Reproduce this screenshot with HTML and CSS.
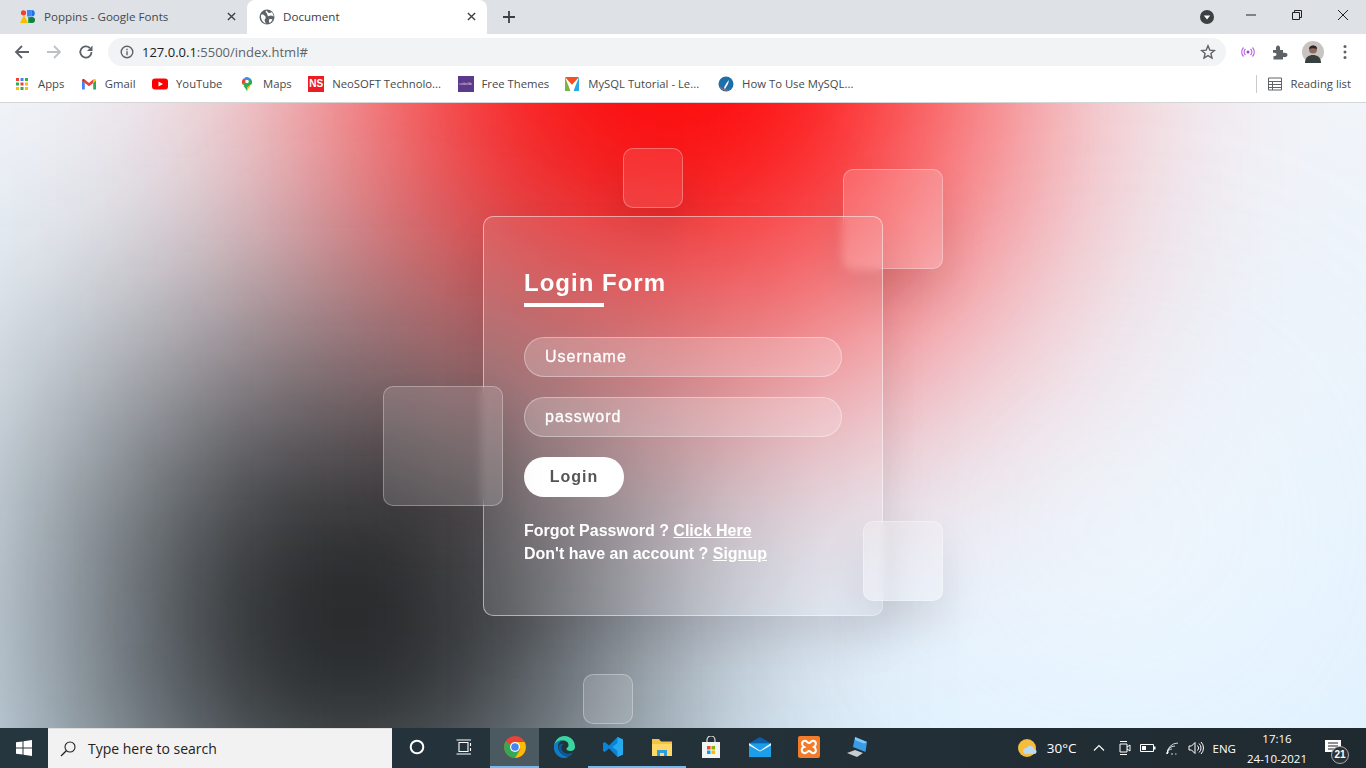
FILE: index.html
```html
<!DOCTYPE html>
<html lang="en">
<head>
  <meta charset="UTF-8" />
  <title>Document</title>
  <link rel="stylesheet" href="styles.css">
</head>
<body>

  <div class="tabstrip">
    <div class="tab">
      <svg class="ico16" viewBox="0 0 16 16"><circle cx="3.5" cy="3.8" r="2.6" fill="#ea4335"/><path d="M0 14 4 6l4 8z" fill="#fbbc04"/><path d="M7 1h4.5v6.500H7z" fill="#4285f4"/><path d="M11.500 1a3.200 3.200 0 0 1 0 6.500z" fill="#1a73e8"/><path d="M8 8h4v6H8z" fill="#34a853"/><circle cx="12" cy="11" r="3" fill="#0d8043"/></svg>
      <span class="tab-title">Poppins - Google Fonts</span>
      <svg class="tab-close" viewBox="0 0 10 10"><path d="M1 1l8 8M9 1 1 9" stroke="#3c4043" stroke-width="1.500"/></svg>
    </div>
    <div class="tab active">
      <svg class="ico16" viewBox="0 0 16 16"><circle cx="8" cy="8" r="7.500" fill="#5f6368"/><path d="M2 6c2-1 3 0 4 1s1 2 0 3 0 3 1 4.500C4 14 1.500 10 2 6zM7 1.500c2 1 1.500 2.500 3.500 2.500S12.500 3 13 3.500c1 1 1.500 2.500 1.500 4-1.500-1-3-1.500-4.500-.5S8.500 5 7.500 4 6.500 2.500 7 1.500zM10.500 10c1 0 2.500 0 3 .5-.5 1.500-2 3-3 3.500-.5-1-1-3 0-4z" fill="#fff"/></svg>
      <span class="tab-title">Document</span>
      <svg class="tab-close" viewBox="0 0 10 10"><path d="M1 1l8 8M9 1 1 9" stroke="#3c4043" stroke-width="1.500"/></svg>
    </div>
    <svg class="new-tab" viewBox="0 0 12 12"><path d="M6 0v12M0 6h12" stroke="#3c4043" stroke-width="1.800"/></svg>
    <div class="win-controls">
      <svg class="media-dot" viewBox="0 0 14 14"><circle cx="7" cy="7" r="7" fill="#3c4043"/><path d="M3.800 5.500h6.400L7 9.500z" fill="#fff"/></svg>
      <svg class="win-btn" viewBox="0 0 46 30"><path d="M18 15h10" stroke="#222" stroke-width="1"/></svg>
      <svg class="win-btn" viewBox="0 0 46 30"><path d="M18.500 12.500h7v7h-7zM20.500 12.500v-2h7v7h-2" fill="none" stroke="#222"/></svg>
      <svg class="win-btn" viewBox="0 0 46 30"><path d="M18 10l10 10M28 10 18 20" stroke="#222" stroke-width="1"/></svg>
    </div>
  </div>

  <div class="toolbar">
    <svg class="nav-ico" viewBox="0 0 16 16"><path d="M15 8H2M8 2 2 8l6 6" fill="none" stroke="#5f6368" stroke-width="1.800"/></svg>
    <svg class="nav-ico" viewBox="0 0 16 16"><path d="M1 8h13M8 2l6 6-6 6" fill="none" stroke="#bdc1c6" stroke-width="1.800"/></svg>
    <svg class="nav-ico" viewBox="0 0 16 16"><path d="M13.500 8A5.600 5.600 0 1 1 11.800 4" fill="none" stroke="#5f6368" stroke-width="1.800"/><path d="M14.500 1.500v5.500H9z" fill="#5f6368"/></svg>
    <div class="omnibox">
      <svg class="info-ico" viewBox="0 0 14 14"><circle cx="7" cy="7" r="5.800" fill="none" stroke="#5f6368" stroke-width="1.400"/><path d="M7 6.200v4M7 3.800v1.400" stroke="#5f6368" stroke-width="1.400"/></svg>
      <span class="url"><b>127.0.0.1</b>:5500/index.html#</span>
      <svg class="star-ico" viewBox="0 0 16 16"><path d="M8 1.800l1.800 4.300 4.600.4-3.500 3 1.100 4.500L8 11.600 4 14l1.100-4.500-3.500-3 4.600-.4z" fill="none" stroke="#5f6368" stroke-width="1.400"/></svg>
    </div>
    <div class="toolbar-right">
      <svg class="ext-ico" viewBox="0 0 16 16"><circle cx="8" cy="8" r="1.500" fill="#a142d8"/><path d="M5.500 5a4 4 0 0 0 0 6M10.500 5a4 4 0 0 1 0 6M3.500 3.500a6.500 6.500 0 0 0 0 9M12.500 3.500a6.500 6.500 0 0 1 0 9" fill="none" stroke="#b565e0" stroke-width="1.100"/></svg>
      <svg class="ext-ico" viewBox="0 0 16 16"><path d="M1 6h3c-.5-3 .5-4.500 2-4.500S8.500 3 8 6h3v3c3-.5 4.500.5 4.500 2s-1.500 2.500-4.500 2v2.500H1.500V12c2 .5 3-.5 3-1.500S3.500 8.500 1 9z" fill="#5f6368"/></svg>
      <svg class="avatar" viewBox="0 0 22 22"><circle cx="11" cy="11" r="11" fill="#c9c4c2"/><path d="M3 22c0-6 4-8 8-8s8 2 8 8z" fill="#37403f"/><circle cx="11" cy="8.500" r="4" fill="#8d6b5b"/><path d="M7 8c0-4 8-5 8 0-3-1-5-1-8 0z" fill="#2b2623"/></svg>
      <svg class="kebab" viewBox="0 0 4 16"><circle cx="2" cy="2.500" r="1.500" fill="#5f6368"/><circle cx="2" cy="8" r="1.500" fill="#5f6368"/><circle cx="2" cy="13.500" r="1.500" fill="#5f6368"/></svg>
    </div>
  </div>

  <div class="bookmarks">
    <a class="bm bm-apps">
      <svg class="bm-ico" viewBox="0 0 14 14">
        <path d="M1 1h3v3H1z" fill="#ea4335"/><path d="M5.500 1h3v3h-3z" fill="#4285f4"/><path d="M10 1h3v3h-3z" fill="#34a853"/>
        <path d="M1 5.500h3v3H1z" fill="#34a853"/><path d="M5.500 5.500h3v3h-3z" fill="#ea4335"/><path d="M10 5.500h3v3h-3z" fill="#fbbc04"/>
        <path d="M1 10h3v3H1z" fill="#fbbc04"/><path d="M5.500 10h3v3h-3z" fill="#34a853"/><path d="M10 10h3v3h-3z" fill="#fbbc04"/>
      </svg>
      <span>Apps</span>
    </a>
    <a class="bm">
      <svg class="bm-ico" viewBox="0 0 16 16"><path d="M1 13.500h2.800V7L1 4.500z" fill="#4285f4"/><path d="M12.200 13.500H15v-9L12.200 7z" fill="#34a853"/><path d="M12.200 3.500V7L15 4.500c0-1.500-1.500-2.200-2.800-1z" fill="#fbbc04"/><path d="M3.800 7V3.500L8 7l4.200-3.500V7L8 10.300z" fill="#ea4335"/><path d="M1 4.500 3.800 7V3.500C2.500 2.300 1 3 1 4.500z" fill="#c5221f"/></svg>
      <span>Gmail</span>
    </a>
    <a class="bm">
      <svg class="bm-ico" viewBox="0 0 16 16"><rect y="2.500" width="16" height="11" rx="3" fill="#f00"/><path d="M6.500 5.500 11 8l-4.500 2.500z" fill="#fff"/></svg>
      <span>YouTube</span>
    </a>
    <a class="bm">
      <svg class="bm-ico" viewBox="0 0 16 16"><path d="M8 15.500c-1-3-2.500-4-3.500-5.500L8 8z" fill="#34a853"/><path d="M8 15.500c1-3 2.500-4 3.500-5.500L8 8z" fill="#fbbc04"/><path d="M3.400 8.200A4.800 4.800 0 0 1 5 2.300L8 6z" fill="#ea4335"/><path d="M5 2.300a4.800 4.800 0 0 1 6.300.3L8 6.500z" fill="#4285f4"/><path d="M11.300 2.600a4.800 4.800 0 0 1 1.300 5.600L9.500 6z" fill="#4285f4"/><path d="M3.400 8.200 11.300 2.600 12.600 8.200 8 11z" fill="#34a853"/><circle cx="8" cy="5.500" r="1.800" fill="#fff"/></svg>
      <span>Maps</span>
    </a>
    <a class="bm">
      <span class="ns-logo">NS</span>
      <span>NeoSOFT Technolo...</span>
    </a>
    <a class="bm bm-free">
      <span class="colorlib">colorlib</span>
      <span>Free Themes</span>
    </a>
    <a class="bm bm-mysql">
      <svg class="bm-ico" viewBox="0 0 16 16"><path d="M1 1h14L8 9z" fill="#f4511e"/><path d="M1 1l5.500 14H1z" fill="#7cb342"/><path d="M15 1 9.500 15H15z" fill="#29a9e1"/><path d="M5 6l3 3 3-3-1.500 9h-3z" fill="#fff"/></svg>
      <span>MySQL Tutorial - Le...</span>
    </a>
    <a class="bm">
      <svg class="bm-ico" viewBox="0 0 16 16"><circle cx="8" cy="8" r="7.500" fill="#1c6fa8"/><path d="M1.500 10c1 4 7 6 11 3.500C9 14 4 13 1.500 10z" fill="#d9534f"/><path d="M6 12c1-3 3-6 5-8l-1 4-3 5z" fill="#fff"/></svg>
      <span>How To Use MySQL...</span>
    </a>
    <div class="reading">
      <svg class="bm-ico" viewBox="0 0 14 14"><path d="M.5 1h13v12H.5zM.5 4.500h13M.5 7.500h13M.5 10.500h13M4.500 4.500V13" fill="none" stroke="#5f6368"/></svg>
      <span>Reading list</span>
    </div>
  </div>

  <div class="page">
    <div class="color color-red"></div>
    <div class="color color-dark"></div>
    <div class="color color-light"></div>

    <div class="square sq-top"></div>
    <div class="square sq-corner"></div>

    <div class="card">
      <h2 class="card-title">Login Form</h2>
      <input class="field" type="text" placeholder="Username" />
      <input class="field" type="password" placeholder="password" />
      <button class="login-btn">Login</button>
      <p class="card-links">Forgot Password ? <a href="#">Click Here</a></p>
      <p class="card-links">Don't have an account ? <a href="#">Signup</a></p>
    </div>

    <div class="square sq-left"></div>
    <div class="square sq-right"></div>
    <div class="square sq-bottom"></div>
  </div>

  <div class="taskbar">
    <svg class="start" viewBox="0 0 16 16"><path d="M0 2.300 6.500 1.400V7.500H0zM7.500 1.300 16 0v7.500H7.500zM0 8.500h6.500v6.100L0 13.700zM7.500 8.500H16V16l-8.500-1.300z" fill="#fff"/></svg>
    <div class="search">
      <svg class="search-ico" viewBox="0 0 16 16"><circle cx="10" cy="6" r="5" fill="none" stroke="#222" stroke-width="1.100"/><path d="M6.300 9.700 1 15" stroke="#222" stroke-width="1.300"/></svg>
      <span>Type here to search</span>
    </div>
    <div class="task-cell">
      <svg class="ico16" viewBox="0 0 16 16"><circle cx="8" cy="8" r="6.300" fill="none" stroke="#fff" stroke-width="2"/></svg>
    </div>
    <div class="task-cell">
      <svg class="ico16 taskview" viewBox="0 0 16 16"><path d="M3 3.500h9v9H3zM.5 1h14.500M.5 15h14.500M14.500 4v3M14.500 9v3" fill="none" stroke="#fff" stroke-width="1.100"/></svg>
    </div>
    <div class="task-cell app-on focus">
      <svg class="task-ico" viewBox="0 0 22 22"><circle cx="11" cy="11" r="11" fill="#ea4335"/><path d="M11 11 1.500 5.500A11 11 0 0 0 11 22l5-6z" fill="#34a853"/><path d="M11 6h9.700A11 11 0 0 1 11 22l5.500-9z" fill="#fbbc04"/><circle cx="11" cy="11" r="5" fill="#fff"/><circle cx="11" cy="11" r="3.800" fill="#4285f4"/></svg>
    </div>
    <div class="task-cell">
      <svg class="task-ico" viewBox="0 0 22 22"><path d="M1 10C2 4 6 0 11.500 0 18 0 22 5 22 11c0 2.500-2 4-4.500 4-2 0-4-.8-4-2 0-2 2-1 2-4C15.500 6 13 4.500 10 4.500 6 4.500 2.500 6.500 1 10z" fill="#3ad6a2"/><path d="M1 10C2 6 6 4 10 4.500c-4 .5-6 4-4.500 9C7 18 12 21 16 20.500c-1.500 1-3.500 1.500-5 1.500C5 22 0 16 1 10z" fill="#0f7cc5"/><path d="M5.500 11c0-2.500 2.500-4 5-3-2 1-3 4-1 7 1.500 2 4 3 7 2.500 2 0 3.500-1 4-1.500-1.500 3-4 5-6.500 4.500-4.500-.5-8.500-4.500-8.500-9.500z" fill="#0a5a9c"/></svg>
    </div>
    <div class="task-cell app-on">
      <svg class="task-ico" viewBox="0 0 22 22"><path d="M15.500 1 21 3.500v15L15.500 21 7 12.500 2.800 16 1 15V7l1.800-1L7 9.500z" fill="#0a84d6"/><path d="M15.500 1 21 3.500v15L15.500 21V15L10.500 11l5-4z" fill="#27a9ee"/></svg>
    </div>
    <div class="task-cell app-on">
      <svg class="task-ico" viewBox="0 0 22 22"><path d="M1 3h7l2 2.500h11V20H1z" fill="#f4c542"/><path d="M1 8h20v12H1z" fill="#ffd865"/><path d="M6 20v-6h10v6h-3v-3H9v3z" fill="#2f9be0"/></svg>
    </div>
    <div class="task-cell">
      <svg class="task-ico" viewBox="0 0 22 22"><path d="M7 7V4a4 4 0 0 1 8 0v3" fill="none" stroke="#ddd" stroke-width="1.200"/><path d="M2 6h18v16H2z" fill="#f4f4f4"/><path d="M7 10h3.500v3.500H7z" fill="#f25022"/><path d="M11.500 10H15v3.500h-3.500z" fill="#7fba00"/><path d="M7 14.500h3.500V18H7z" fill="#00a4ef"/><path d="M11.500 14.500H15V18h-3.500z" fill="#ffb900"/></svg>
    </div>
    <div class="task-cell">
      <svg class="task-ico" viewBox="0 0 24 22"><path d="M0 7 12 0l12 7v1L12 15 0 8z" fill="#0a5fa8"/><path d="M0 7h24v15H0z" fill="#1d9ee8"/><path d="M0 7l12 8 12-8v2L12 16 0 9z" fill="#fff"/></svg>
    </div>
    <div class="task-cell">
      <svg class="task-ico" viewBox="0 0 22 22"><rect width="22" height="22" rx="2" fill="#f37b2a"/><path d="M6 5c3-1 3 2 5 2s2-3 5-2 2 5 0 6c2 1 3 5 0 6s-3-2-5-2-2 3-5 2-3-5 0-6c-2-1-3-5 0-6z" fill="none" stroke="#fff" stroke-width="2"/></svg>
    </div>
    <div class="task-cell">
      <svg class="task-ico" viewBox="0 0 22 22"><path d="M8 1l12 5-1.500 10L6 11z" fill="#3a9be6"/><path d="M8 1l12 5-3 1.500L8 4z" fill="#86c8f5"/><path d="M0 17l8-3 8 3-6 4z" fill="#c7ccd0"/></svg>
    </div>
    <div class="tray">
      <svg class="tray-weather" viewBox="0 0 20 20"><circle cx="9" cy="10" r="9" fill="#f6bd3c"/><path d="M8 16a3 3 0 0 1 .500-6 4 4 0 0 1 7.500 1 2.500 2.500 0 0 1 0 5z" fill="#b9dcf4"/></svg>
      <span class="tray-temp">30°C</span>
      <svg class="tray-ico chev" viewBox="0 0 12 12"><path d="M1 8.500 6 3.500l5 5" fill="none" stroke="#fff" stroke-width="1.100"/></svg>
      <svg class="tray-ico" viewBox="0 0 14 16"><path d="M3 4h7v8H3zM10 7l3-2v6l-3-2M3 1.500h7M3 14.500h7" fill="none" stroke="#fff"/></svg>
      <svg class="tray-ico" viewBox="0 0 16 16"><path d="M.5 4.500h13v7H.5z" fill="none" stroke="#fff"/><path d="M2 6h4v4H2zM14 6.500h1.500v3H14z" fill="#fff"/></svg>
      <svg class="tray-ico" viewBox="0 0 16 16"><path d="M3 14a2 2 0 0 1 2-2M3 14a5 5 0 0 1 5-5M3 14a8 8 0 0 1 8-8M3 14A11 11 0 0 1 14 3M7 14l2 0M11 14l1.500 0" fill="none" stroke="#fff" stroke-width=".8"/></svg>
      <svg class="tray-ico" viewBox="0 0 16 16"><path d="M1 6h2.500L7 2.500v11L3.500 10H1z" fill="none" stroke="#fff"/><path d="M9.500 5.500a3.500 3.500 0 0 1 0 5M11 3.500a6 6 0 0 1 0 9M13 2a8.500 8.500 0 0 1 0 12" fill="none" stroke="#fff"/></svg>
      <span class="tray-lang">ENG</span>
      <div class="tray-clock">
        <span>17:16</span>
        <span>24-10-2021</span>
      </div>
      <div class="notify">
        <svg class="notify-ico" viewBox="0 0 16 16"><path d="M0 0h16v12H0z" fill="#fff"/><path d="M3 3h10M3 6h10M3 9h10" stroke="#222" stroke-width="1"/></svg>
        <span class="notify-badge">21</span>
      </div>
    </div>
  </div>

</body>
</html>
```

FILE: styles.css
```css
* {
  box-sizing: border-box;
}
html, body {
  margin: 0;
  height: 768px;
  overflow: hidden;
}
body {
  font-family: "Open Sans", sans-serif;
  display: flex;
  flex-direction: column;
}
svg {
  display: block;
  flex: none;
}
.ico16 {
  width: 16px;
  height: 16px;
}

/* browser top */
.tabstrip {
  height: 34px;
  background: #dee1e6;
  display: flex;
  align-items: flex-end;
  padding-left: 8px;
  flex: none;
}
.tab {
  width: 239px;
  height: 34px;
  display: flex;
  align-items: center;
  padding: 0 11px 1px 12px;
  font-size: 11.6px;
  color: #45494d;
}
.tab.active {
  background: #fff;
  border-radius: 8px 8px 0 0;
  color: #3c4043;
  width: 240px;
}
.tab-title {
  margin-left: 8px;
  flex: 1;
  white-space: nowrap;
}
.tab-close {
  width: 9px;
  height: 9px;
}
.new-tab {
  width: 12px;
  height: 12px;
  margin: 0 0 11px 16px;
}
.win-controls {
  margin-left: auto;
  display: flex;
  align-items: flex-start;
  align-self: flex-start;
}
.media-dot {
  width: 14px;
  height: 14px;
  margin: 10px 14px 0 0;
}
.win-btn {
  width: 46px;
  height: 30px;
}
.toolbar {
  height: 35px;
  background: #fff;
  display: flex;
  align-items: center;
  padding-left: 14px;
  flex: none;
}
.nav-ico {
  width: 16px;
  height: 16px;
  margin-right: 16px;
}
.omnibox {
  width: 1118px;
  height: 28px;
  margin-left: -2px;
  border-radius: 14px;
  background: #f1f3f4;
  display: flex;
  align-items: center;
  padding: 0 10px 0 12px;
}
.info-ico {
  width: 14px;
  height: 14px;
}
.url {
  margin-left: 8px;
  font-size: 13px;
  color: #5f6368;
  flex: 1;
}
.url b {
  font-weight: 400;
  color: #202124;
}
.star-ico {
  width: 16px;
  height: 16px;
}
.toolbar-right {
  display: flex;
  align-items: center;
  margin-left: 14px;
}
.ext-ico {
  width: 16px;
  height: 16px;
  margin-right: 16px;
}
.avatar {
  width: 22px;
  height: 22px;
  margin-left: -2px;
}
.kebab {
  width: 4px;
  height: 16px;
  margin-left: 19px;
}
.bookmarks {
  height: 34px;
  background: #fff;
  border-bottom: 1px solid #d3d5d8;
  display: flex;
  align-items: center;
  padding: 0 15px 4px;
  font-size: 11.3px;
  color: #45494d;
  flex: none;
}
.bm {
  display: flex;
  align-items: center;
  gap: 8px;
  margin-right: 16.5px;
  white-space: nowrap;
}
.bm-apps {
  gap: 9px;
}
.bm-free {
  margin-right: 15px;
}
.bm-mysql {
  margin-right: 19px;
}
.bm-ico {
  width: 16px;
  height: 16px;
}
.bm-apps .bm-ico {
  width: 14px;
  height: 14px;
}
.ns-logo {
  width: 16px;
  height: 16px;
  background: #ed1c24;
  color: #fff;
  font: 700 10px/16px "Liberation Sans", sans-serif;
  text-align: center;
}
.colorlib {
  width: 16px;
  height: 16px;
  background: #5b3a8e;
  color: #ddd;
  font: 400 4px/16px "Liberation Sans", sans-serif;
  text-align: center;
  overflow: hidden;
}
.reading {
  margin-left: auto;
  height: 18px;
  display: flex;
  align-items: center;
  gap: 9px;
  border-left: 1px solid #c8cacd;
  padding-left: 11px;
}
.reading .bm-ico {
  width: 14px;
  height: 14px;
}

/* login page */
.page {
  position: relative;
  flex: 1;
  display: flex;
  align-items: center;
  justify-content: center;
  overflow: hidden;
  background: linear-gradient(to bottom, #f1f4f9, #dff1ff);
}
.color {
  position: absolute;
  filter: blur(150px);
}
.color-red {
  top: -350px;
  left: 370px;
  width: 600px;
  height: 600px;
  background: #f00;
}
.color-dark {
  bottom: -140px;
  left: 100px;
  width: 500px;
  height: 500px;
  background: #0a0a0a;
}
.color-light {
  bottom: 50px;
  right: 100px;
  width: 300px;
  height: 300px;
  background: #fff;
  opacity: .7;
}
.card {
  position: relative;
  width: 400px;
  height: 400px;
  padding: 0 40px;
  display: flex;
  flex-direction: column;
  justify-content: center;
  align-items: flex-start;
  background: rgba(255,255,255,.1);
  border: 1px solid rgba(255,255,255,.5);
  border-radius: 10px;
  backdrop-filter: blur(5px);
  box-shadow: 0 25px 45px rgba(0,0,0,.1);
  font-family: "Liberation Sans", sans-serif;
  color: #fff;
}
.card-title {
  position: relative;
  margin: 2px 0 40px;
  font-size: 24px;
  font-weight: 700;
  letter-spacing: 1px;
}
.card-title::before {
  content: "";
  position: absolute;
  left: 0;
  bottom: -10px;
  width: 80px;
  height: 4px;
  background: #fff;
}
.field {
  width: 318px;
  height: 40px;
  margin-bottom: 20px;
  padding: 0 20px;
  border: 1px solid rgba(255,255,255,.35);
  border-radius: 20px;
  outline: none;
  background: rgba(255,255,255,.2);
  color: #fff;
  font: 500 16px "Liberation Sans", sans-serif;
  letter-spacing: 1px;
}
.field::placeholder {
  color: #fff;
  opacity: 1;
  -webkit-text-stroke: .3px #fff;
}
.login-btn {
  width: 100px;
  height: 40px;
  margin-bottom: 22px;
  border: none;
  border-radius: 20px;
  background: #fff;
  color: #555;
  font: 700 16px "Liberation Sans", sans-serif;
  letter-spacing: 1px;
}
.card-links {
  margin: 0;
  font-size: 16px;
  line-height: 23px;
  font-weight: 700;
  white-space: nowrap;
}
.card-links a {
  color: #fff;
}
.square {
  position: absolute;
  background: rgba(255,255,255,.1);
  border: 1px solid rgba(255,255,255,.3);
  border-radius: 10px;
  backdrop-filter: blur(5px);
  box-shadow: 0 25px 45px rgba(0,0,0,.1);
}
.sq-top {
  left: 623px;
  top: 45px;
  width: 60px;
  height: 60px;
}
.sq-corner {
  left: 843px;
  top: 66px;
  width: 100px;
  height: 100px;
  background: rgba(255,255,255,.17);
}
.sq-left {
  left: 383px;
  top: 283px;
  width: 120px;
  height: 120px;
  background: rgba(255,255,255,.12);
}
.sq-right {
  left: 863px;
  top: 418px;
  width: 80px;
  height: 80px;
  background: rgba(255,255,255,.2);
}
.sq-bottom {
  left: 583px;
  top: 571px;
  width: 50px;
  height: 50px;
  background: rgba(255,255,255,.14);
  box-shadow: none;
}

/* windows taskbar */
.taskbar {
  height: 40px;
  background: linear-gradient(90deg, #25363e 0%, #24323a 45%, #1f2a30 100%);
  display: flex;
  align-items: center;
  flex: none;
  color: #fff;
}
.start {
  width: 16px;
  height: 16px;
  margin: 0 16px;
}
.search {
  width: 344px;
  height: 40px;
  background: #f2f2f2;
  border-top: 1px solid #ddd;
  display: flex;
  align-items: center;
  padding-left: 12px;
  color: #222;
  font-size: 14px;
}
.search-ico {
  width: 16px;
  height: 16px;
  margin-right: 12px;
}
.task-cell {
  width: 49px;
  height: 40px;
  display: flex;
  align-items: center;
  justify-content: center;
  border-bottom: 2px solid transparent;
}
.task-cell.app-on {
  border-bottom-color: #76b9ed;
}
.task-cell.focus {
  background: #4b5a60;
}
.taskview {
  margin-right: 3px;
}
.task-ico {
  width: 22px;
  height: 22px;
}
.tray {
  margin-left: auto;
  display: flex;
  align-items: center;
  font-size: 11.5px;
  height: 40px;
}
.tray-weather {
  width: 20px;
  height: 20px;
}
.tray-temp {
  margin: 0 16px 0 9px;
  font-size: 13.5px;
}
.tray-ico {
  width: 16px;
  height: 16px;
  margin-right: 8px;
}
.chev {
  width: 12px;
  height: 12px;
  margin-right: 11px;
}
.tray-lang {
  margin-left: 1px;
}
.tray-clock {
  display: flex;
  flex-direction: column;
  align-items: center;
  margin-left: 11px;
  padding-top: 2px;
  line-height: 20px;
}
.notify {
  position: relative;
  width: 51px;
  height: 40px;
  margin-left: 8px;
}
.notify-ico {
  position: absolute;
  left: 10px;
  top: 12px;
  width: 16px;
  height: 16px;
}
.notify-badge {
  position: absolute;
  left: 16px;
  top: 18px;
  width: 18px;
  height: 18px;
  border-radius: 50%;
  background: #2a3338;
  border: 1px solid #aaa;
  font: 700 10px/16px "Liberation Sans", sans-serif;
  text-align: center;
}
```
